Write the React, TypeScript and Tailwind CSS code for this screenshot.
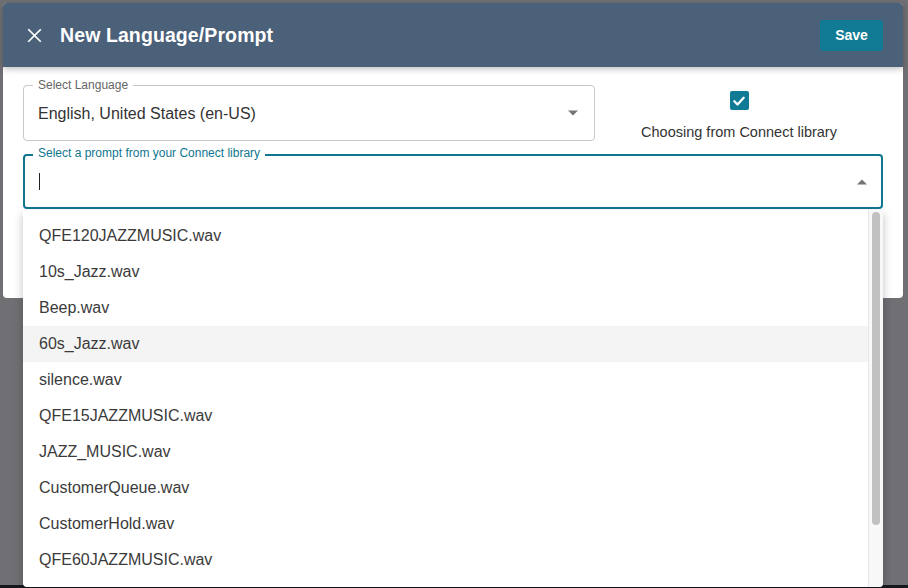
import { useState } from "react";

const prompts = [
  "QFE120JAZZMUSIC.wav",
  "10s_Jazz.wav",
  "Beep.wav",
  "60s_Jazz.wav",
  "silence.wav",
  "QFE15JAZZMUSIC.wav",
  "JAZZ_MUSIC.wav",
  "CustomerQueue.wav",
  "CustomerHold.wav",
  "QFE60JAZZMUSIC.wav",
];

const font = { fontFamily: '"Liberation Sans", Arial, sans-serif' };

const App = () => {
  const [hovered] = useState(3);

  return (
    <div className="relative h-[588px] w-[908px] overflow-hidden bg-[#707074]" style={font}>
      {/* ── Dialog ── */}
      <div className="ml-[3px] mt-[3px] h-[295px] w-[900px] rounded bg-white">
        {/* Header */}
        <header className="relative z-10 flex h-16 items-center justify-between rounded-t bg-[#4b6079] pl-[23px] pr-5 shadow-[0_2px_6px_rgba(0,0,0,0.25)]">
          <div className="flex items-center gap-[17px]">
            <svg className="h-[17px] w-[17px]" viewBox="0 0 24 24" fill="none" stroke="white" strokeWidth="2.4" strokeLinecap="square">
              <line x1="4" y1="4" x2="20" y2="20" />
              <line x1="20" y1="4" x2="4" y2="20" />
            </svg>
            <h1 className="mt-[2px] text-[19.5px] font-bold tracking-[0.1px] text-white">New Language/Prompt</h1>
          </div>
          <button className="h-[31px] w-[63px] rounded-[3px] bg-[#117a94] text-sm font-bold text-white">
            Save
          </button>
        </header>

        {/* Body */}
        <div className="px-5 pt-[18px]">
          <div className="flex h-[56px] items-start">
            {/* Select Language */}
            <div className="relative h-[56px] w-[572px] rounded border border-[#c8c8c8]">
              <span className="absolute -top-[8px] left-[9px] bg-white px-[5px] text-xs leading-[14px] text-[#666]">
                Select Language
              </span>
              <div className="flex h-full items-center justify-between pl-[14px] pr-4">
                <span className="mt-[2px] text-base text-[#333]">English, United States (en-US)</span>
                <svg className="h-[6px] w-[10px]" viewBox="0 0 10 5">
                  <path d="M0 0 L10 0 L5 5 Z" fill="#757575" />
                </svg>
              </div>
            </div>

            {/* Checkbox */}
            <div className="flex flex-1 flex-col items-center pt-[6px]">
              <span className="flex h-[19px] w-[19px] items-center justify-center rounded-[2px] bg-[#117a94]">
                <svg className="h-[14px] w-[14px]" viewBox="0 0 24 24" fill="none" stroke="white" strokeWidth="4" strokeLinecap="round" strokeLinejoin="round">
                  <polyline points="4 12.5 9.5 18 20 6.5" />
                </svg>
              </span>
              <span className="mt-[14px] text-[14.5px] leading-[17px] text-[#333]">Choosing from Connect library</span>
            </div>
          </div>

          {/* Prompt select (focused) */}
          <div className="relative mt-[13px] h-[55px] rounded border-2 border-[#10768f]">
            <span className="absolute -top-[10px] left-[8px] bg-white px-[5px] text-xs leading-[14px] text-[#10768f]">
              Select a prompt from your Connect library
            </span>
            <div className="flex h-full items-center justify-between pl-[14px] pr-[14px]">
              <span className="h-[17px] w-px bg-[#222]" />
              <svg className="h-[6px] w-[10px]" viewBox="0 0 10 5">
                <path d="M0 5 L10 5 L5 0 Z" fill="#757575" />
              </svg>
            </div>

            {/* Dropdown list */}
            <div className="absolute left-[-2px] top-[54px] z-20 flex h-[377px] w-[860px] overflow-hidden rounded-b bg-white shadow-[0_4px_10px_rgba(0,0,0,0.25)]">
              <ul className="flex-1 pt-[8px]">
                {prompts.map((p, i) => (
                  <li
                    key={p}
                    className={`flex h-9 items-center pl-4 text-base text-[#3b3b3b] ${i === hovered ? "bg-[#f4f4f4]" : ""}`}
                  >
                    {p}
                  </li>
                ))}
              </ul>
              {/* scrollbar */}
              <div className="w-[15px] border-l border-[#e6e6e6] bg-[#f8f8f8] pl-[3px] pt-[2px]">
                <div className="h-[313px] w-[8px] rounded bg-[#c1c1c1]" />
              </div>
            </div>
          </div>
        </div>
      </div>

      {/* bottom strip of the page behind */}
      <div className="absolute bottom-0 left-0 h-[3px] w-full bg-[#15181d]" />
    </div>
  );
};

export default App;
